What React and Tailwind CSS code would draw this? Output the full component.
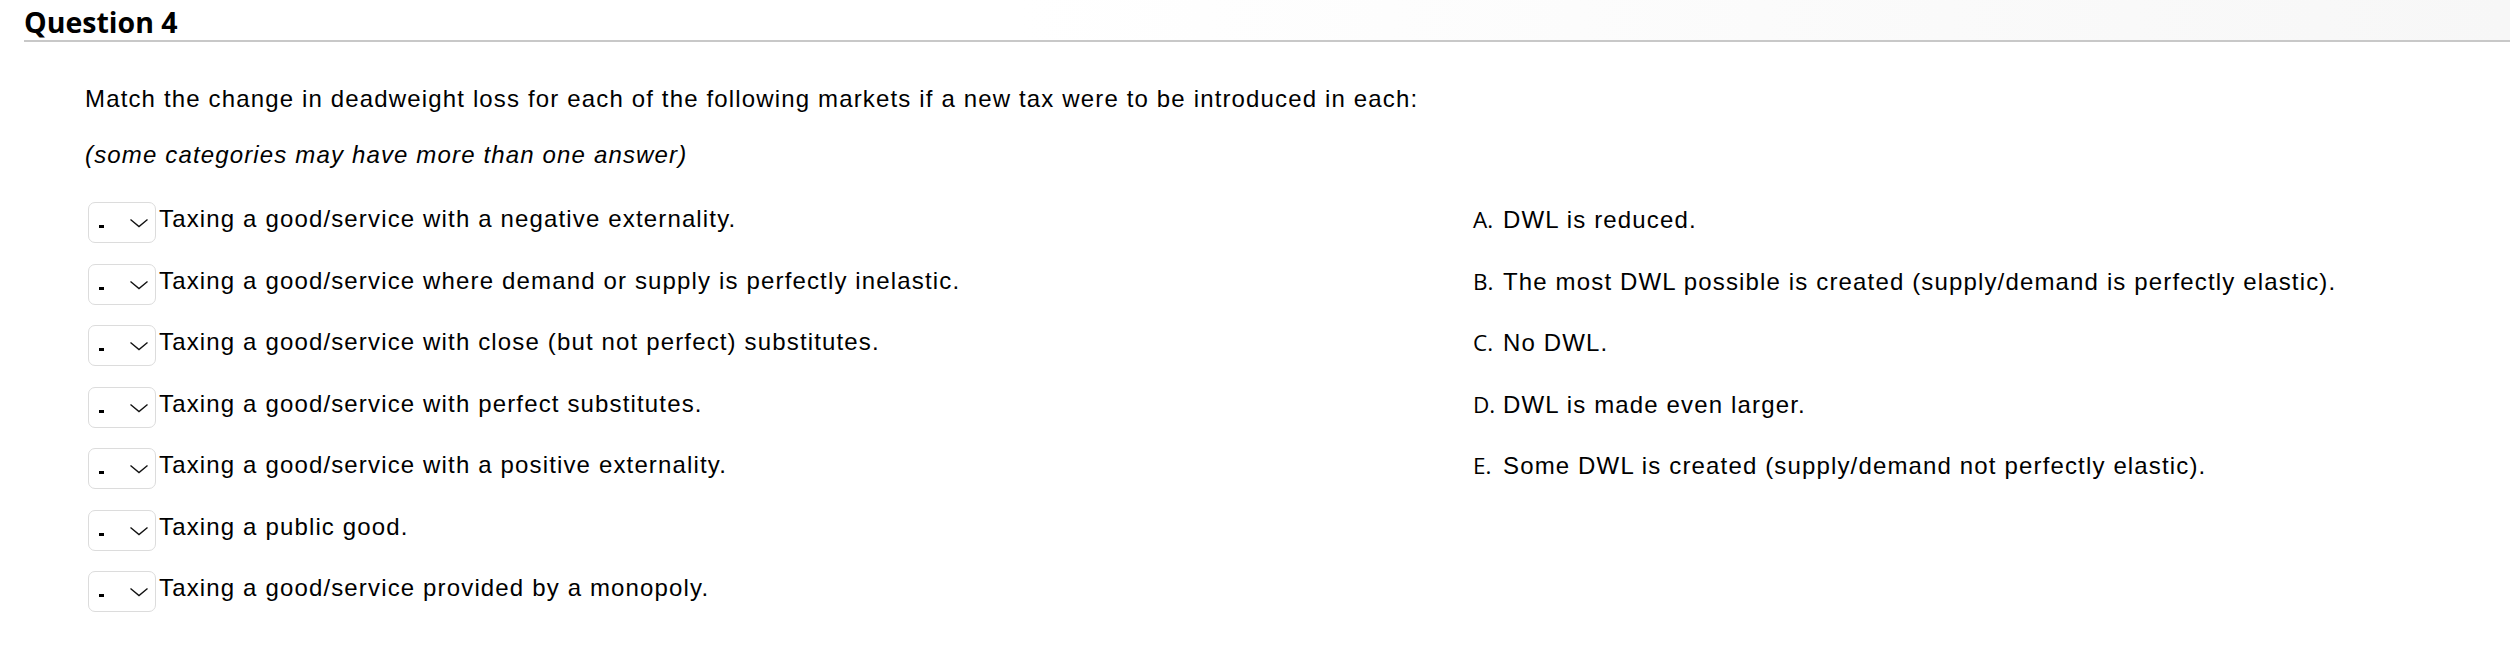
import React from 'react';

const statements = [
  'Taxing a good/service with a negative externality.',
  'Taxing a good/service where demand or supply is perfectly inelastic.',
  'Taxing a good/service with close (but not perfect) substitutes.',
  'Taxing a good/service with perfect substitutes.',
  'Taxing a good/service with a positive externality.',
  'Taxing a public good.',
  'Taxing a good/service provided by a monopoly.',
];

const answers = [
  { letter: 'A.', text: 'DWL is reduced.' },
  { letter: 'B.', text: 'The most DWL possible is created (supply/demand is perfectly elastic).' },
  { letter: 'C.', text: 'No DWL.' },
  { letter: 'D.', text: 'DWL is made even larger.' },
  { letter: 'E.', text: 'Some DWL is created (supply/demand not perfectly elastic).' },
];

// fake select box, "-" with a chevron
const MatchSelect = () => (
  <div className="relative w-[68px] h-[41px] shrink-0 border border-[#dcdcdc] rounded-[7px] bg-white">
    <span className="absolute left-[10px] top-[22px] w-[5px] h-[3px] bg-black" />
    <svg
      className="absolute left-[40px] top-[15px]"
      width="20"
      height="10"
      viewBox="0 0 20 10"
      fill="none"
    >
      <path d="M1.5 1.5 L10 8.5 L18.5 1.5" stroke="#111" strokeWidth="1.4" />
    </svg>
  </div>
);

export default function App() {
  return (
    <div className="w-full min-h-[652px] bg-white text-black font-['Liberation_Sans',Arial,sans-serif]">
      {/* Header */}
      <div className="ml-[24px] h-[42px] border-b-2 border-[#c8c8c8] bg-linear-to-r from-white from-40% to-[#f7f7f7]">
        <h1 className="pt-[8px] text-[28.5px] leading-[28px] font-bold font-['Open_Sans',sans-serif]">Question 4</h1>
      </div>

      {/* Body */}
      <div className="pl-[85px] tracking-[1.15px]">
        <p className="mt-[43px] text-[24px] leading-[28px]">
          Match the change in deadweight loss for each of the following markets if a new tax were to be introduced in each:
        </p>
        <p className="mt-[28px] text-[24px] leading-[28px] italic">(some categories may have more than one answer)</p>

        <div className="mt-[33px] ml-[3px] grid grid-cols-[1385px_1fr]">
          <div className="flex flex-col">
            {statements.map((s, i) => (
              <div key={i} className="flex h-[61.5px] items-start">
                <MatchSelect />
                <span className="ml-[3px] text-[24px] leading-[28px] pt-[3px]">{s}</span>
              </div>
            ))}
          </div>
          <div className="flex flex-col">
            {answers.map((a) => (
              <div key={a.letter} className="flex h-[61.5px] items-baseline pt-[4px]">
                <span className="w-[30px] shrink-0 text-[22.5px] leading-[28px] tracking-normal font-['Open_Sans',sans-serif]">{a.letter}</span>
                <span className="text-[24px] leading-[28px]">{a.text}</span>
              </div>
            ))}
          </div>
        </div>
      </div>
    </div>
  );
}
